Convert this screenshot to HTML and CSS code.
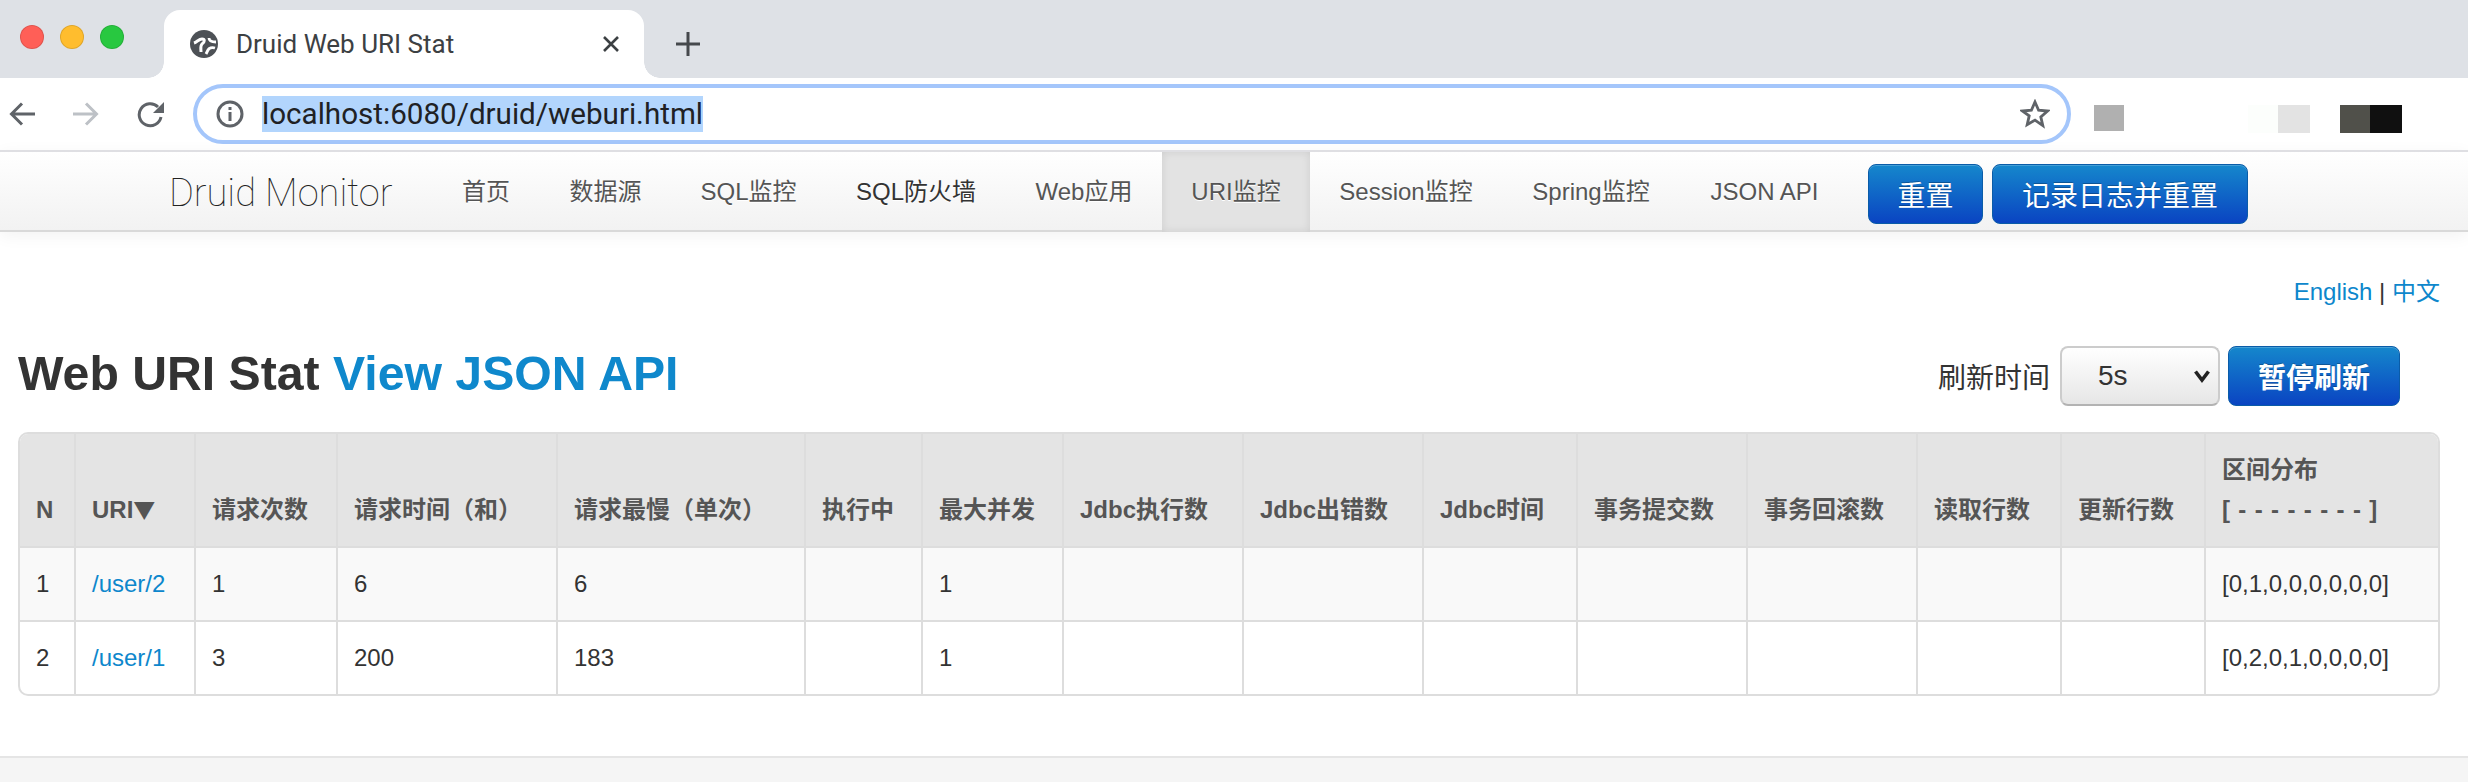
FILE: index.html
```html
<!DOCTYPE html>
<html lang="zh">
<head>
<meta charset="utf-8">
<title>Druid Web URI Stat</title>
<link rel="stylesheet" href="styles.css">
</head>
<body>
<header class="chrome">
  <div class="tabstrip">
    <div class="lights"><i class="light red"></i><i class="light yellow"></i><i class="light green"></i></div>
    <div class="tab">
      <svg class="globe" width="28" height="28" viewBox="0 0 28 28"><circle cx="14" cy="14" r="14" fill="#4d5156"/><path d="M4 13c3-1 5-4 8-4 3 0 3 3 0 5-2 2-1 5-1 8" fill="none" stroke="#fff" stroke-width="3"/><path d="M19 8c0 2 2 4 7 4M25 18c-3-1-6 0-7 2l-2 4" fill="none" stroke="#fff" stroke-width="2.800"/></svg>
      <span class="tab-title">Druid Web URI Stat</span>
      <svg class="tab-close" width="18" height="18" viewBox="0 0 18 18"><path d="M2 2l14 14M16 2L2 16" stroke="#3c4043" stroke-width="2.600"/></svg>
    </div>
    <svg class="newtab" width="24" height="24" viewBox="0 0 24 24"><path d="M12 0v24M0 12h24" stroke="#45484c" stroke-width="3"/></svg>
  </div>
  <div class="toolbar">
    <div class="toolnav">
      <svg width="26" height="24" viewBox="0 0 26 24"><path d="M13 1.500L2.500 12 13 22.500M2.500 12H26" fill="none" stroke="#5f6368" stroke-width="3"/></svg>
      <svg width="26" height="24" viewBox="0 0 26 24"><path d="M13 1.500L23.500 12 13 22.500M23.500 12H0" fill="none" stroke="#bdc1c6" stroke-width="3"/></svg>
      <svg width="28" height="28" viewBox="0 0 28 28"><path d="M24 17a11 11 0 1 1-3-10" fill="none" stroke="#5f6368" stroke-width="3"/><path d="M27 2v11H16z" fill="#5f6368"/></svg>
    </div>
    <div class="omnibox">
      <svg class="info" width="28" height="28" viewBox="0 0 28 28"><circle cx="14" cy="14" r="12" fill="none" stroke="#5f6368" stroke-width="3"/><rect x="12.500" y="12" width="3" height="9" fill="#5f6368"/><rect x="12.500" y="7" width="3" height="3" fill="#5f6368"/></svg>
      <span class="url">localhost:6080/druid/weburi.html</span>
      <svg class="star" width="30" height="30" viewBox="0 0 30 30"><path d="M15 3l3.600 8.200 8.900.8-6.700 5.900 2 8.700L15 21.100 7.200 25.600l2-8.700L2.500 12l8.900-.8z" fill="none" stroke="#5f6368" stroke-width="2.800"/></svg>
    </div>
    <div class="extensions">
      <i class="mask m-gray"></i>
      <i class="mask m-faint"></i><i class="mask m-light"></i>
      <i class="mask m-dark"></i><i class="mask m-black"></i>
    </div>
  </div>
</header>

<nav class="navbar">
  <a class="brand">Druid Monitor</a>
  <ul class="nav">
    <li>首页</li>
    <li>数据源</li>
    <li>SQL监控</li>
    <li class="strong">SQL防火墙</li>
    <li>Web应用</li>
    <li class="active">URI监控</li>
    <li>Session监控</li>
    <li>Spring监控</li>
    <li>JSON API</li>
  </ul>
  <div class="nav-actions">
    <button class="btn btn-reset">重置</button>
    <button class="btn btn-log">记录日志并重置</button>
  </div>
</nav>

<main class="content">
  <div class="lang"><a>English</a> | <a>中文</a></div>
  <div class="titlebar">
    <h1>Web URI Stat <a>View JSON API</a></h1>
    <div class="refresh">
      <span class="refresh-label">刷新时间</span>
      <div class="select"><span>5s</span><svg width="16" height="14" viewBox="0 0 16 14"><path d="M1.500 2.500L8 11l6.500-8.500" fill="none" stroke="#222" stroke-width="3.600"/></svg></div>
      <button class="btn btn-pause">暂停刷新</button>
    </div>
  </div>
  <table class="stat">
    <colgroup>
      <col class="c1"><col class="c2"><col class="c3"><col class="c4"><col class="c5"><col class="c6"><col class="c7"><col class="c8"><col class="c9"><col class="c10"><col class="c11"><col class="c12"><col class="c13"><col class="c14"><col class="c15">
    </colgroup>
    <thead>
      <tr>
        <th>N</th><th>URI<span class="sort">▼</span></th><th>请求次数</th><th>请求时间（和）</th><th>请求最慢（单次）</th><th>执行中</th><th>最大并发</th><th>Jdbc执行数</th><th>Jdbc出错数</th><th>Jdbc时间</th><th>事务提交数</th><th>事务回滚数</th><th>读取行数</th><th>更新行数</th><th>区间分布<br><span class="range">[ - - - - - - - - ]</span></th>
      </tr>
    </thead>
    <tbody>
      <tr class="odd">
        <td>1</td><td><a>/user/2</a></td><td>1</td><td>6</td><td>6</td><td></td><td>1</td><td></td><td></td><td></td><td></td><td></td><td></td><td></td><td>[0,1,0,0,0,0,0,0]</td>
      </tr>
      <tr>
        <td>2</td><td><a>/user/1</a></td><td>3</td><td>200</td><td>183</td><td></td><td>1</td><td></td><td></td><td></td><td></td><td></td><td></td><td></td><td>[0,2,0,1,0,0,0,0]</td>
      </tr>
    </tbody>
  </table>
</main>
<footer class="footer"></footer>
</body>
</html>
```
FILE: styles.css
```css
* { box-sizing: border-box; }
html, body { margin: 0; padding: 0; }
body { width: 2468px; height: 782px; overflow: hidden; background: #fff; color: #333;
  font-family: "Liberation Sans", "Noto Sans CJK SC", sans-serif; font-size: 24px; display: flex; flex-direction: column; }

.chrome { flex: none; }
.tabstrip { height: 78px; background: #dee1e6; display: flex; align-items: flex-end; }
.lights { display: flex; gap: 16px; width: 164px; padding: 0 0 29px 20px; }
.light { width: 24px; height: 24px; border-radius: 50%; border: 1px solid rgba(0,0,0,.12); }
.red { background: #ff5f57; } .yellow { background: #ffbd2e; } .green { background: #28c840; }
.tab { width: 480px; height: 68px; background: #fff; border-radius: 16px 16px 0 0; display: flex; align-items: center; padding: 0 24px 0 26px; position: relative; }
.tab::before, .tab::after { content: ""; position: absolute; bottom: 0; width: 16px; height: 16px; }
.tab::before { left: -16px; background: radial-gradient(circle at 0 0, #dee1e6 15.500px, #fff 16px); }
.tab::after { right: -16px; background: radial-gradient(circle at 100% 0, #dee1e6 15.500px, #fff 16px); }
.globe { flex: none; }
.tab-title { margin-left: 18px; font: 26px Roboto, sans-serif; color: #3c4043; white-space: nowrap; flex: 1; }
.tab-close { flex: none; }
.newtab { margin: 0 0 22px 32px; flex: none; }

.toolbar { height: 72px; background: #fff; display: flex; align-items: center; }
.toolnav { width: 193px; display: flex; align-items: center; gap: 38px; padding-left: 9px; }
.omnibox { width: 1878px; height: 60px; border: 4px solid #a4c6fb; border-radius: 30px; display: flex; align-items: center; padding: 0 17px 0 19px; }
.info { flex: none; }
.url { margin-left: 18px; font: 29.600px/36px Roboto, sans-serif; color: #202124; background: #b2d5fd; flex: none; }
.star { margin-left: auto; flex: none; }
.extensions { flex: 1; display: flex; align-items: flex-start; height: 28px; margin-top: 10px; padding-left: 23px; }
.mask { display: block; height: 26px; width: 30px; }
.m-gray { background: #b0b0b0; }
.m-faint { background: #fcfefc; margin-left: 124px; height: 28px; }
.m-light { background: #e3e3e3; height: 28px; width: 32px; }
.m-dark { background: #50504a; margin-left: 30px; height: 28px; }
.m-black { background: #101010; height: 28px; width: 32px; }

.navbar { flex: none; height: 82px; border-top: 2px solid #dfdfe3; border-bottom: 2px solid #d9d9d9; background: linear-gradient(#fff, #f2f2f2); box-shadow: 0 4px 16px rgba(0,0,0,.05); display: flex; padding-left: 169px; position: relative; }
.brand { width: 263px; font: 100 38px/82px Roboto, sans-serif; color: #222; white-space: nowrap; }
.nav { list-style: none; margin: 0; padding: 0; display: grid; grid-template-columns: 108px 131px 155px 180px 156px 148px 192px 178px 169px; }
.nav li { text-align: center; line-height: 80px; color: #555; text-shadow: 0 1px 0 #fff; white-space: nowrap; }
.nav li.strong { color: #333; }
.nav li.active { background: #e3e3e3; box-shadow: inset 0 0 8px rgba(0,0,0,.1); color: #555; height: 80px; }
.nav-actions { display: flex; gap: 9px; padding: 12px 0 0 19px; }
.btn { height: 60px; border: 1px solid #0a5ca8; border-radius: 8px; color: #fff; font-family: inherit; font-size: 28px; padding: 0; background: linear-gradient(#1587cc, #0a44c2); text-shadow: 0 -1px 0 rgba(0,0,0,.25); box-shadow: inset 0 1px 0 rgba(255,255,255,.2); }
.btn-reset { width: 115px; }
.btn-log { width: 256px; }
.btn-pause { width: 172px; font-weight: bold; }

.content { flex: 1; padding: 0 28px 0 18px; }
.lang { text-align: right; line-height: 28px; margin-top: 46px; }
.lang a, .stat a { color: #0d87cc; }
.titlebar { display: flex; justify-content: space-between; align-items: center; margin-top: 40px; height: 60px; padding-right: 40px; }
h1 { margin: 0 0 6px; font-size: 48.200px; font-weight: bold; color: #333; line-height: 60px; white-space: nowrap; }
h1 a { color: #0f88cc; }
.refresh { display: flex; align-items: center; }
.refresh-label { font-size: 28px; margin-right: 10px; }
.select { width: 160px; height: 60px; border: 2px solid #ccc; border-bottom-color: #b3b3b3; border-radius: 8px; background: linear-gradient(#fff, #e6e6e6); display: flex; align-items: center; justify-content: space-between; padding: 0 8px 0 36px; margin-right: 8px; font-size: 28px; }

.stat { width: 2422px; table-layout: fixed; border-collapse: separate; border-spacing: 0; border: 2px solid #ddd; border-radius: 10px; margin-top: 26px; overflow: hidden; }
.c1 { width: 54px; } .c2 { width: 120px; } .c3 { width: 142px; } .c4 { width: 220px; } .c5 { width: 248px; }
.c6 { width: 117px; } .c7 { width: 141px; } .c8 { width: 180px; } .c9 { width: 180px; } .c10 { width: 154px; }
.c11 { width: 170px; } .c12 { width: 170px; } .c13 { width: 144px; } .c14 { width: 144px; } .c15 { width: 234px; }
.stat th, .stat td { text-align: left; padding: 0 16px; border-left: 2px solid #ddd; white-space: nowrap; }
.stat th:first-child, .stat td:first-child { border-left: 0; }
.stat th { background: #e4e4e4; height: 114px; vertical-align: bottom; color: #555; line-height: 40px; padding-bottom: 16px; border-bottom: 2px solid #ddd; }
.sort { font-family: "Noto Sans CJK SC", sans-serif; font-size: 22px; }
.range { word-spacing: 1.700px; }
.stat td { height: 72px; color: #333; }
.stat tbody tr + tr td { height: 74px; border-top: 2px solid #ddd; }
.odd td { background: #f9f9f9; }

.footer { flex: none; height: 26px; background: #f5f5f5; border-top: 2px solid #e5e5e5; }
```
